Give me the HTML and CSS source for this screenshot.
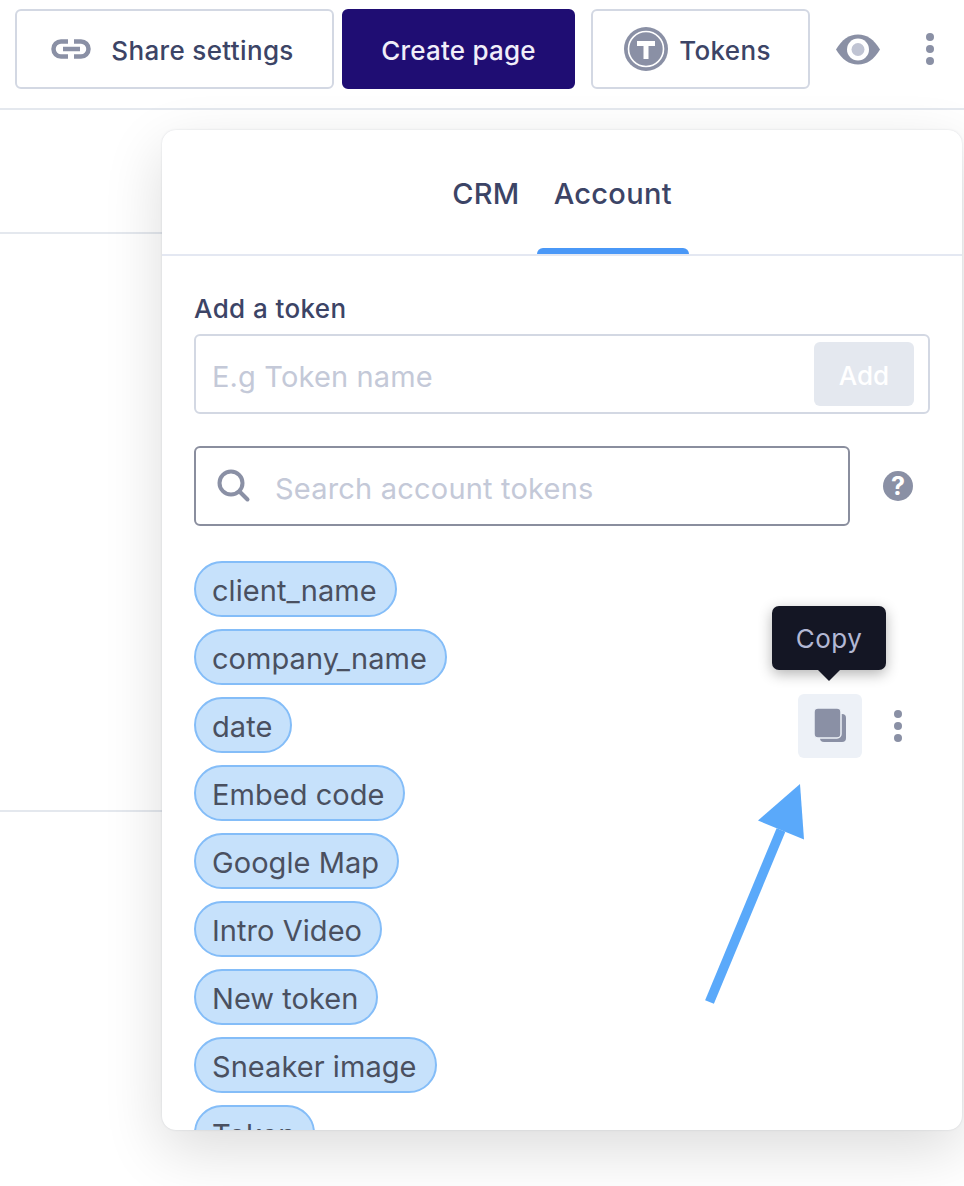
FILE: index.html
```html
<!DOCTYPE html>
<html lang="en">
<head>
<meta charset="utf-8">
<title>Tokens</title>
<link rel="stylesheet" href="styles.css">
</head>
<body>
<header class="topbar">
  <button class="btn btn-share">
    <svg class="ico-link" viewBox="0 0 40 20" width="40" height="20"><path d="M17 2.500H10a7.500 7.500 0 0 0 0 15h7M23 2.500h7a7.500 7.500 0 0 1 0 15h-7" fill="none" stroke="#8a90a5" stroke-width="4.500"/><path d="M12 10h17" stroke="#8a90a5" stroke-width="4.500"/></svg>
    <span>Share settings</span>
  </button>
  <button class="btn btn-primary"><span>Create page</span></button>
  <button class="btn btn-tokens">
    <svg viewBox="0 0 44 44" width="44" height="44"><circle cx="22" cy="22" r="22" fill="#8a90a5"/><circle cx="22" cy="22" r="17.500" fill="#8a90a5" stroke="#fff" stroke-width="1.600"/><path d="M13 14h18v5h-6.500v13h-5v-13h-6.500z" fill="#fff"/></svg>
    <span>Tokens</span>
  </button>
  <svg class="ico-eye" viewBox="0 0 44 30" width="44" height="31"><path d="M0 15C6 5 13 0 22 0s16 5 22 15c-6 10-13 15-22 15S6 25 0 15z" fill="#8a90a5"/><circle cx="22" cy="15" r="11" fill="#fff"/><circle cx="22" cy="15" r="6.500" fill="#c0c4d3"/></svg>
  <div class="dots dots-top"><i></i><i></i><i></i></div>
</header>
<div class="rule rule-a"></div>
<div class="rule rule-b"></div>

<section class="panel">
  <nav class="tabs">
    <span class="tab">CRM</span>
    <span class="tab tab-active">Account</span>
  </nav>
  <div class="body">
    <label class="add-label">Add a token</label>
    <div class="add-field">
      <span class="ph ph-add">E.g Token name</span>
      <span class="add-btn">Add</span>
    </div>
    <div class="search-row">
      <div class="search">
        <svg viewBox="0 0 34 34" width="34" height="34"><circle cx="14" cy="14" r="11.500" fill="none" stroke="#8a90a5" stroke-width="4"/><path d="M22.500 22.500l8 8" stroke="#8a90a5" stroke-width="4" stroke-linecap="round"/></svg>
        <span class="ph ph-search">Search account tokens</span>
      </div>
      <svg class="ico-help" viewBox="0 0 30 30" width="30" height="30"><circle cx="15" cy="15" r="15" fill="#8a90a5"/><text x="15" y="24" text-anchor="middle" class="help-q">?</text></svg>
    </div>
    <ul class="chips">
      <li><span class="chip">client_name</span></li>
      <li><span class="chip">company_name</span></li>
      <li><span class="chip">date</span></li>
      <li><span class="chip">Embed code</span></li>
      <li><span class="chip">Google Map</span></li>
      <li><span class="chip">Intro Video</span></li>
      <li><span class="chip">New token</span></li>
      <li><span class="chip">Sneaker image</span></li>
      <li><span class="chip">Token</span></li>
    </ul>
  </div>
  <div class="tooltip">Copy</div>
  <div class="copy-btn">
    <svg viewBox="0 0 34 36" width="34" height="36"><path d="M10 6h18a4 4 0 0 1 4 4v20a4 4 0 0 1-4 4H10a4 4 0 0 1-4-4z" fill="#8a90a5"/><rect x="0" y="0" width="27" height="30" rx="4" fill="#8a90a5" stroke="#edf1f7" stroke-width="1.500"/></svg>
  </div>
  <div class="dots dots-row"><i></i><i></i><i></i></div>
</section>

<svg class="arrow" viewBox="0 0 150 250" width="150" height="250"><path d="M29.500 232L101 60" stroke="#5aa9fa" stroke-width="9.500" fill="none"/><path d="M120 14L78 50.500L124 69.500z" fill="#5aa9fa"/></svg>
</body>
</html>
```
FILE: styles.css
```css
* { box-sizing: border-box; }
html, body { margin: 0; padding: 0; }
body {
  position: relative;
  width: 964px;
  height: 1186px;
  overflow: hidden;
  background: #fff;
  font-family: Inter, "Liberation Sans", sans-serif;
  color: #3c4466;
}
.topbar {
  display: flex;
  align-items: center;
  height: 110px;
  padding: 9px 0 19px 15px;
  border-bottom: 2px solid #e4e8ee;
}
.btn {
  display: flex;
  align-items: center;
  justify-content: center;
  height: 80px;
  background: #fff;
  border: 2px solid #d3d8e3;
  border-radius: 6px;
  font: 500 26px Inter, "Liberation Sans", sans-serif;
  letter-spacing: .35px;
  color: #3c4466;
  padding: 0;
}
.btn span { padding-top: 2px; }
.btn-share { width: 319px; gap: 20px; margin-right: 8px; padding-right: 4px; }
.btn-primary { width: 233px; background: #1f0d73; border-color: #1f0d73; color: #f0eef9; margin-right: 16px; letter-spacing: .2px; }
.btn-tokens { width: 219px; gap: 11px; padding-right: 6px; }
.ico-eye { margin-left: 26px; }
.dots { display: flex; flex-direction: column; gap: 4px; }
.dots i { display: block; width: 8px; height: 8px; border-radius: 50%; background: #8a90a5; }
.dots-top { margin-left: 46px; }
.rule { position: absolute; left: 0; width: 170px; height: 2px; background: #e4e8ee; }
.rule-a { top: 232px; }
.rule-b { top: 810px; }
.panel {
  position: absolute;
  left: 162px;
  top: 130px;
  width: 800px;
  height: 1000px;
  background: #fff;
  border-radius: 14px;
  overflow: hidden;
  box-shadow: 0 0 2px rgba(60,70,100,.18), 0 20px 60px rgba(0,0,0,.14);
}
.tabs {
  display: flex;
  justify-content: center;
  height: 126px;
  border-bottom: 2px solid #e4e8f2;
}
.tab {
  position: relative;
  padding: 47px 17px 0;
  font-size: 29px;
  letter-spacing: .3px;
  font-weight: 500;
  line-height: 34px;
  height: 124px;
}
.tab-active::after {
  content: "";
  position: absolute;
  left: 0;
  right: 0;
  bottom: 0;
  height: 6px;
  background: #4a98f7;
  border-radius: 6px 6px 0 0;
}
.body { padding: 37px 32px 0; }
.add-label { display: block; font-size: 26px; font-weight: 500; letter-spacing: .4px; line-height: 32px; height: 32px; margin-bottom: 9px; }
.add-field {
  display: flex;
  align-items: center;
  justify-content: space-between;
  width: 736px;
  height: 80px;
  padding: 0 14px 0 16px;
  border: 2px solid #d3d8e3;
  border-radius: 6px;
}
.ph { font-size: 29px; color: #c4c9d8; padding-top: 4px; }
.ph-add { letter-spacing: .15px; }
.ph-search { letter-spacing: .2px; }
.add-btn {
  display: flex;
  align-items: center;
  justify-content: center;
  width: 100px;
  height: 64px;
  padding-top: 2px;
  background: #e4e8ef;
  border-radius: 6px;
  color: #fff;
  font-size: 26px;
  font-weight: 500;
}
.search-row { display: flex; align-items: center; gap: 33px; margin-top: 32px; }
.search {
  display: flex;
  align-items: center;
  gap: 24px;
  width: 656px;
  height: 80px;
  padding-left: 21px;
  border: 2px solid #8a8e9e;
  border-radius: 6px;
}
.help-q { font: 700 25px Inter, "Liberation Sans", sans-serif; fill: #fff; }
.chips { list-style: none; margin: 35px 0 0; padding: 0; display: flex; flex-direction: column; gap: 12px; align-items: flex-start; }
.chips li { display: block; height: 56px; }
.chip {
  display: flex;
  align-items: center;
  height: 56px;
  padding: 2px 18px 0 16px;
  border: 2px solid #84bdf8;
  border-radius: 28px;
  background: #c6e1fb;
  color: #4a5060;
  font-size: 29px;
  letter-spacing: .05px;
}
.tooltip {
  position: absolute;
  left: 610px;
  top: 476px;
  width: 114px;
  height: 64px;
  padding-top: 1px;
  display: flex;
  align-items: center;
  justify-content: center;
  background: #141624;
  border-radius: 7px;
  color: #b3b8d4;
  font-size: 26px;
  letter-spacing: .5px;
  box-shadow: 0 4px 14px rgba(0,0,0,.3);
}
.tooltip::after {
  content: "";
  position: absolute;
  left: 46px;
  bottom: -11px;
  border-left: 11px solid transparent;
  border-right: 11px solid transparent;
  border-top: 11px solid #141624;
}
.copy-btn {
  position: absolute;
  left: 636px;
  top: 564px;
  width: 64px;
  height: 64px;
  display: flex;
  align-items: center;
  justify-content: center;
  padding: 0 0 0 2px;
  background: #edf1f7;
  border-radius: 6px;
}
.dots-row { position: absolute; left: 732px; top: 580px; }
.arrow { position: absolute; left: 680px; top: 770px; }
```
